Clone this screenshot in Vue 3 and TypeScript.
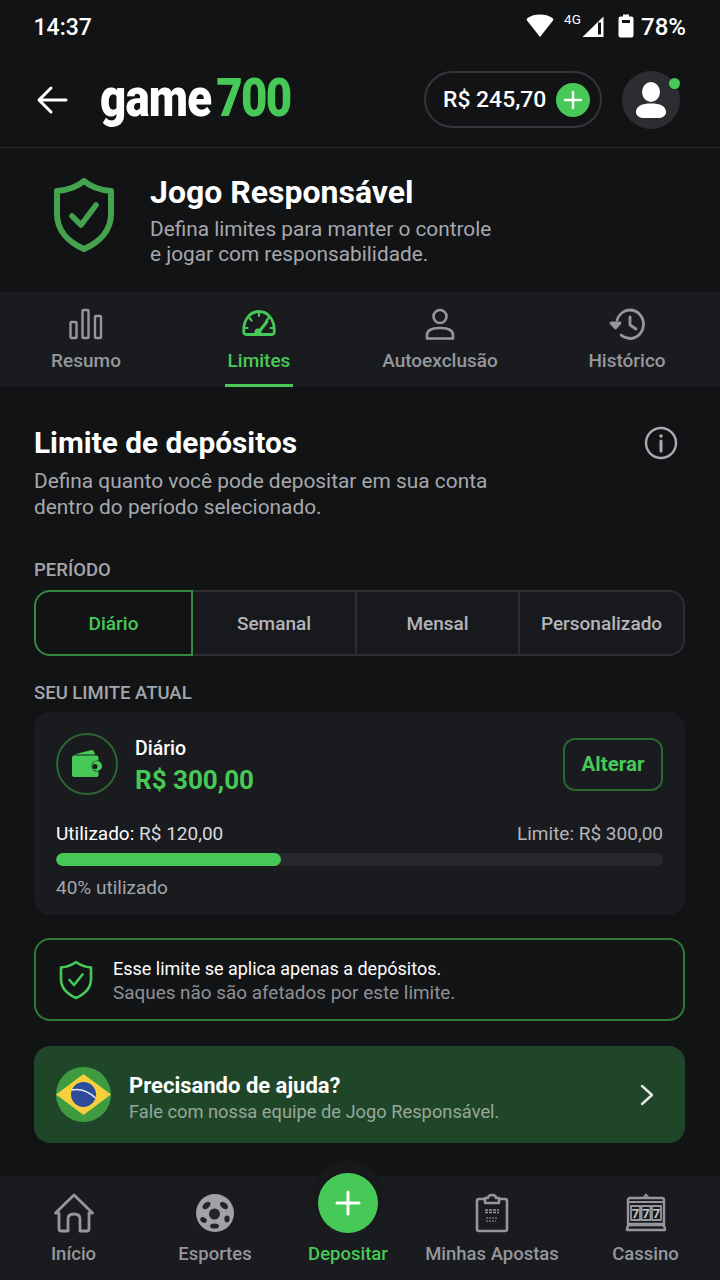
<script setup lang="ts">
const tabs = [
  { label: 'Resumo', icon: 'bars' },
  { label: 'Limites', icon: 'gauge', active: true },
  { label: 'Autoexclusão', icon: 'person' },
  { label: 'Histórico', icon: 'history' },
]
const periods = ['Diário', 'Semanal', 'Mensal', 'Personalizado']
</script>

<template>
  <div class="page">
    <div class="status">
      <span class="time">14:37</span>
      <div class="status-right">
        <svg class="wifi" width="28" height="24" viewBox="0 0 28 24"><path d="M14 23 L1 6.500 Q0 5 1.500 4 C5 1.500 9.500 0.500 14 0.500 C18.500 0.500 23 1.500 26.500 4 Q28 5 27 6.500 Z" fill="#fff"/></svg>
        <span class="net">4G</span>
        <svg class="signal" width="22" height="22" viewBox="0 0 22 22"><path d="M21.500 0.500 V21 H0.500 Z" fill="#fff"/><rect x="16" y="6.500" width="3" height="12" fill="#121314"/></svg>
        <svg class="batt" width="16" height="24" viewBox="0 0 16 24"><path d="M5 0.500 H11 V2.500 H13.500 Q15.500 2.500 15.500 4.500 V21.500 Q15.500 23.500 13.500 23.500 H2.500 Q0.500 23.500 0.500 21.500 V4.500 Q0.500 2.500 2.500 2.500 H5 Z" fill="#fff"/><rect x="4" y="6" width="8" height="3" fill="#121314"/></svg>
        <span class="pct">78%</span>
      </div>
    </div>

    <header class="topbar">
      <svg class="back" width="32" height="32" viewBox="0 0 32 32" fill="none" stroke="#fff" stroke-width="3" stroke-linecap="round" stroke-linejoin="round"><path d="M30 16 H4 M15 4 L3 16 L15 28"/></svg>
      <div class="logo"><span class="logo-in">game<em>700</em></span></div>
      <div class="balance">
        <span>R$ 245,70</span>
        <span class="plus-small"><svg width="20" height="20" viewBox="0 0 20 20" stroke="#fff" stroke-width="2.400" stroke-linecap="round"><path d="M10 2 V18 M2 10 H18"/></svg></span>
      </div>
      <div class="avatar">
        <svg width="32" height="36" viewBox="0 0 32 36" fill="#fff"><ellipse cx="16" cy="10" rx="9" ry="10"/><path d="M1 30 C1 24 7 21.500 16 21.500 C25 21.500 31 24 31 30 C31 34 27 36 23 36 H9 C5 36 1 34 1 30 Z"/></svg>
        <i class="online"></i>
      </div>
    </header>

    <section class="hero">
      <svg class="hero-shield" width="62" height="74" viewBox="0 0 62 74" fill="none"><path d="M31 3 C38 9 47 12 58 13 V36 C58 52 47 64 31 71 C15 64 4 52 4 36 V13 C15 12 24 9 31 3 Z" stroke="#43a34f" stroke-width="6" stroke-linejoin="round"/><path d="M19 38 L28 47 L43 27" stroke="#43a34f" stroke-width="5.500" stroke-linecap="round" stroke-linejoin="round"/></svg>
      <div>
        <h1>Jogo Responsável</h1>
        <p>Defina limites para manter o controle<br>e jogar com responsabilidade.</p>
      </div>
    </section>

    <nav class="tabs">
      <div v-for="t in tabs" :key="t.label" class="tab" :class="{ on: t.active }">
        <svg v-if="t.icon === 'bars'" width="36" height="32" viewBox="0 0 36 32" fill="none" stroke="currentColor" stroke-width="2.400"><rect x="2.500" y="14" width="6" height="16" rx="1"/><rect x="14.500" y="2" width="6" height="28" rx="1"/><rect x="27" y="8" width="6" height="22" rx="1"/></svg>
        <svg v-else-if="t.icon === 'gauge'" width="36" height="32" viewBox="0 0 36 32" fill="none" stroke="currentColor" stroke-width="2.800" stroke-linecap="round" stroke-linejoin="round"><path d="M5 26.500 Q3 26.500 2.800 24 C2 12 9 3.500 18 3.500 C27 3.500 34 12 33.200 24 Q33 26.500 31 26.500 Z"/><path d="M18 4.500 V8 M8.500 10 L10.500 12.500 M27.500 10 L25.500 12.500 M4 20 H6.500 M32 20 H29.500" stroke-width="2.200"/><path d="M17 25 L26 13.500" stroke-width="3"/><circle cx="17" cy="24" r="3.500" fill="currentColor" stroke="none"/></svg>
        <svg v-else-if="t.icon === 'person'" width="32" height="32" viewBox="0 0 32 32" fill="none" stroke="currentColor" stroke-width="2.600" stroke-linejoin="round"><circle cx="16" cy="8.500" r="6.500"/><path d="M3 30.500 V27 C3 22.500 8 20 16 20 C24 20 29 22.500 29 27 V30.500 Z"/></svg>
        <svg v-else width="36" height="32" viewBox="0 0 36 32" fill="none" stroke="currentColor" stroke-width="2.800" stroke-linecap="round" stroke-linejoin="round"><path d="M8 12 C10 6 15 2 21 2 C28.500 2 34.500 8.500 34.500 16 C34.500 24 28.500 30.500 21 30.500 C17.500 30.500 14.500 29 12 27"/><path d="M21 9 V17 L27 21"/><path d="M2 15 H11 L6.500 20 Z" fill="currentColor"/></svg>
        <span>{{ t.label }}</span>
      </div>
    </nav>

    <main class="content">
      <div class="title-row">
        <h2>Limite de depósitos</h2>
        <svg width="34" height="34" viewBox="0 0 34 34" fill="none" stroke="#a9abb1" stroke-width="2.400" stroke-linecap="round"><circle cx="17" cy="17" r="15"/><path d="M17 15 V25" stroke-width="3"/><circle cx="17" cy="10" r="1.200" fill="#a9abb1" stroke-width="1.200"/></svg>
      </div>
      <p class="sub">Defina quanto você pode depositar em sua conta<br>dentro do período selecionado.</p>

      <div class="label periodo">PERÍODO</div>
      <div class="seg">
        <div v-for="(p, i) in periods" :key="p" class="seg-item" :class="{ on: i === 0 }">{{ p }}</div>
      </div>

      <div class="label atual">SEU LIMITE ATUAL</div>
      <div class="card">
        <div class="card-top">
          <div class="wallet">
            <svg width="32" height="30" viewBox="0 0 32 30" fill="#47c957"><path d="M3 5.500 L20.500 1 Q23 0.500 24 5.500 Z"/><path d="M1 8.500 Q1 6.500 3 6.500 H25.500 Q27.500 6.500 27.500 8.500 V11.500 H26 A5.500 5.500 0 0 0 26 22.500 H27.500 V26 Q27.500 28 25.500 28 H3 Q1 28 1 26 Z"/><path d="M26 12 A5 5 0 0 1 26 22 A5 5 0 0 1 26 12 Z M24 15 A2.500 2.500 0 0 0 24 20 A2.500 2.500 0 0 0 24 15 Z" fill-rule="evenodd"/></svg>
          </div>
          <div class="card-info">
            <div class="card-name">Diário</div>
            <div class="card-val">R$ 300,00</div>
          </div>
          <div class="alter">Alterar</div>
        </div>
        <div class="usage"><span class="used">Utilizado: <b>R$ 120,00</b></span><span class="lim">Limite: R$ 300,00</span></div>
        <div class="track"><div class="fill" :style="{ width: '37.100%' }"></div></div>
        <div class="pct-used">40% utilizado</div>
      </div>

      <div class="notice">
        <svg width="36" height="40" viewBox="0 0 36 40" fill="none" stroke="#47c957" stroke-width="2.600" stroke-linecap="round" stroke-linejoin="round"><path d="M18 2 C22 5 27 7 33 7.500 V19 C33 28 27 34 18 38 C9 34 3 28 3 19 V7.500 C9 7 14 5 18 2 Z"/><path d="M11.500 20 L16 25 L24.500 14.500"/></svg>
        <div class="notice-text"><div class="n1">Esse limite se aplica apenas a depósitos.</div><div class="n2">Saques não são afetados por este limite.</div></div>
      </div>

      <div class="help">
        <svg width="55" height="55" viewBox="0 0 55 55"><circle cx="27.500" cy="27.500" r="27.500" fill="#3f9b3f"/><path d="M27.500 7 L55 27.500 L27.500 48 L0 27.500 Z" fill="#f6cf3c"/><circle cx="27.500" cy="27.500" r="12.500" fill="#2f4c9c"/><path d="M15.500 23 C23 21.500 32 24 39.500 31" stroke="#e8edf5" stroke-width="1.500" fill="none"/></svg>
        <div class="help-text"><div class="h1">Precisando de ajuda?</div><div class="h2">Fale com nossa equipe de Jogo Responsável.</div></div>
        <svg width="16" height="24" viewBox="0 0 16 24" fill="none" stroke="#e6e9e6" stroke-width="2.400" stroke-linecap="round" stroke-linejoin="round"><path d="M3 3 L13 12 L3 21"/></svg>
      </div>
    </main>

    <footer class="bottom">
      <div class="nav-item">
        <svg width="40" height="40" viewBox="0 0 40 40" fill="none" stroke="currentColor" stroke-width="2.800" stroke-linecap="round" stroke-linejoin="round"><path d="M1.500 20 L20 2 L38.500 20 H35 V36 Q35 38 33 38 H26 V26 Q26 21 20 21 Q14 21 14 26 V38 H7 Q5 38 5 36 V20 Z"/></svg>
        <span>Início</span>
      </div>
      <div class="nav-item">
        <svg width="40" height="40" viewBox="0 0 40 40"><circle cx="20" cy="20" r="19" fill="#a0a2a8"/><g fill="#232427"><circle cx="19.500" cy="21" r="5.500"/><ellipse cx="11.500" cy="12.500" rx="4.500" ry="2.800" transform="rotate(-40 11.500 12.500)"/><ellipse cx="29" cy="12.500" rx="4.500" ry="2.800" transform="rotate(40 29 12.500)"/><ellipse cx="32" cy="26" rx="2.600" ry="3.400"/><ellipse cx="19.500" cy="33" rx="4.500" ry="2.600"/><ellipse cx="8.500" cy="27" rx="3.400" ry="2.600" transform="rotate(30 8.500 27)"/></g></svg>
        <span>Esportes</span>
      </div>
      <div class="nav-item dep">
        <div class="fab-back"></div>
        <div class="fab"><svg width="26" height="26" viewBox="0 0 26 26" stroke="#fff" stroke-width="3" stroke-linecap="round"><path d="M13 2 V24 M2 13 H24"/></svg></div>
        <span>Depositar</span>
      </div>
      <div class="nav-item">
        <svg width="34" height="40" viewBox="0 0 34 40" fill="none" stroke="currentColor" stroke-width="2.600" stroke-linejoin="round"><path d="M10 6 H4 Q2 6 2 8 V36 Q2 38 4 38 H30 Q32 38 32 36 V8 Q32 6 30 6 H24"/><path d="M10 5 H13 C13 1 21 1 21 5 H24 V10 H10 Z"/><path d="M10 17 H24 M10 19.500 H24" stroke-width="1.600" stroke-dasharray="3 1"/><path d="M11 25 H23 M11 28 H21" stroke-width="1.400" stroke-dasharray="2 1" opacity=".7"/></svg>
        <span>Minhas Apostas</span>
      </div>
      <div class="nav-item">
        <svg width="42" height="40" viewBox="0 0 42 40" fill="none" stroke="currentColor" stroke-width="2.400" stroke-linecap="round" stroke-linejoin="round"><path d="M5 5 H37 Q39 5 39 7 V31 H3 V7 Q3 5 5 5 Z"/><path d="M3 9 H39" stroke-width="1.800"/><path d="M19 4 L21 1.500 L23 4" stroke-width="1.800"/><path d="M2 37 Q2 32 5 32 H37 Q40 32 40 37 Z"/><g stroke-width="1.800"><rect x="6" y="13" width="9" height="14"/><rect x="16.500" y="13" width="9" height="14"/><rect x="27" y="13" width="9" height="14"/></g><g class="sevens" stroke="none"><text x="10.500" y="25">7</text><text x="21" y="25">7</text><text x="31.500" y="25">7</text></g></svg>
        <span>Cassino</span>
      </div>
    </footer>
  </div>
</template>

<style>
html, body { margin: 0; background: #121314; }
</style>

<style scoped>
.page { width: 720px; height: 1280px; background: #121314; color: #fff; font-family: Roboto, "Noto Sans", sans-serif; display: flex; flex-direction: column; overflow: hidden; }

.status { height: 52px; flex: none; box-sizing: border-box; padding: 14px 34px 0 33.500px; display: flex; justify-content: space-between; align-items: flex-start; font-size: 23px; font-weight: 500; }
.time { line-height: 28px; }
.status-right { display: flex; align-items: flex-start; height: 28px; }
.net { font-size: 13.500px; line-height: 14px; margin: -2px 0 0 10px; font-weight: 400; width: 18px; }
.signal { margin: 2px 0 0 0; }
.batt { margin: 0 0 0 14px; }
.pct { margin: -1px 0 0 7px; line-height: 28px; font-size: 24px; }

.topbar { height: 96px; flex: none; box-sizing: border-box; display: flex; align-items: center; padding: 0 40px 0 36px; border-bottom: 1.500px solid #25272b; }
.back { flex: none; }
.logo { width: 190px; margin-left: 32px; flex: none; height: 60px; }
.logo-in { display: inline-block; font-size: 53px; font-weight: 900; line-height: 56px; letter-spacing: -1px; transform: scaleX(.86); transform-origin: 0 50%; white-space: nowrap; }
.logo-in em { font-style: normal; color: #47c957; margin-left: 6px; letter-spacing: -2px; }
.balance { margin-left: auto; width: 178px; height: 57px; box-sizing: border-box; border: 2px solid #33353a; border-radius: 29px; display: flex; align-items: center; justify-content: space-between; padding: 0 10px 0 17px; font-size: 22.900px; font-weight: 500; white-space: nowrap; }
.plus-small { width: 34px; height: 34px; border-radius: 50%; background: #47c957; display: flex; align-items: center; justify-content: center; }
.avatar { position: relative; width: 58px; height: 58px; border-radius: 50%; background: #2b2d31; margin-left: 20px; display: flex; align-items: center; justify-content: center; }
.online { position: absolute; right: 0; top: 7px; width: 11px; height: 11px; background: #47c957; border-radius: 50%; }

.hero { height: 144px; flex: none; box-sizing: border-box; padding: 26px 0 0 53px; display: flex; gap: 35px; align-items: flex-start; }
.hero-shield { margin-top: 4px; flex: none; }
.hero h1 { margin: 0; font-size: 32px; line-height: 36px; font-weight: 700; }
.hero p { margin: 7px 0 0; font-size: 20.800px; line-height: 25px; color: #a6a8ae; }

.tabs { height: 95px; background: #1a1b1e; display: grid; grid-template-columns: 172px 174px 188px 186px; flex: none; }
.tab { position: relative; display: flex; flex-direction: column; align-items: center; padding-top: 16px; color: #95979d; font-size: 19px; font-weight: 500; }
.tab span { margin-top: 10px; line-height: 22px; }
.tab.on { color: #47c957; }
.tab.on::after { content: ""; position: absolute; bottom: 0; left: 53px; width: 68px; height: 3px; background: #47c957; }

.content { flex: 1; padding: 0 35px 0 34px; }
.title-row { display: flex; justify-content: space-between; align-items: center; padding-top: 38px; padding-right: 7px; }
.title-row h2 { margin: 0; font-size: 29.800px; line-height: 36px; font-weight: 700; }
.sub { margin: 7px 0 0; font-size: 20.870px; line-height: 26px; color: #a6a8ae; }
.label { font-size: 18.500px; font-weight: 500; color: #a3a5ab; line-height: 22px; }
.periodo { margin-top: 39px; }
.seg { margin-top: 9px; height: 66px; box-sizing: border-box; display: grid; grid-template-columns: 159px 164px 163px 165px; border-radius: 16px; background: #18191c; }
.seg-item { display: flex; align-items: center; justify-content: center; font-size: 19px; font-weight: 500; color: #b3b5bb; border: 2px solid #2c2e32; border-left: 0; }
.seg-item:last-child { border-radius: 0 16px 16px 0; }
.seg-item.on { color: #47c957; background: #121314; border: 2px solid #36873f; border-radius: 16px 0 0 16px; }
.atual { margin-top: 26px; }
.card { margin-top: 8px; height: 203px; box-sizing: border-box; background: #1a1b1e; border-radius: 16px; padding: 20px 22px 0; }
.card-top { display: flex; align-items: center; height: 64px; }
.wallet { width: 62px; height: 62px; box-sizing: border-box; border: 2px solid #2a6532; border-radius: 50%; display: flex; align-items: center; justify-content: center; }
.card-info { margin-left: 17px; padding-top: 4px; }
.card-name { font-size: 19.500px; font-weight: 500; line-height: 24px; }
.card-val { font-size: 26px; font-weight: 700; color: #47c957; line-height: 32px; margin-top: 3px; }
.alter { margin-left: auto; width: 100px; height: 53px; box-sizing: border-box; border: 2px solid #2a6532; border-radius: 12px; display: flex; align-items: center; justify-content: center; color: #47c957; font-size: 20.500px; font-weight: 700; }
.usage { margin-top: 26px; display: flex; justify-content: space-between; font-size: 19px; line-height: 24px; }
.used { font-weight: 400; }
.used b { font-weight: 400; color: #d9dade; }
.lim { color: #b3b5bb; }
.track { margin-top: 7px; height: 13px; border-radius: 6.500px; background: #26282d; overflow: hidden; }
.fill { height: 100%; background: #47c957; border-radius: 6.500px; }
.pct-used { margin-top: 10px; font-size: 19px; line-height: 24px; color: #a3a5ab; }

.notice { margin-top: 23px; height: 83px; box-sizing: border-box; border: 2px solid #2f7a37; border-radius: 16px; background: #131416; display: flex; align-items: center; padding-left: 22px; gap: 19px; }
.notice-text { padding-top: 2px; }
.n1 { font-size: 18px; line-height: 24px; color: #fff; }
.n2 { font-size: 18.900px; line-height: 24px; color: #8f9197; }

.help { margin-top: 25px; height: 97px; box-sizing: border-box; border-radius: 16px; background: #20462a; display: flex; align-items: center; padding: 0 30px 0 22px; }
.help-text { margin-left: 18px; flex: 1; padding-top: 7px; }
.h1 { font-size: 22px; font-weight: 700; line-height: 28px; }
.h2 { font-size: 18.300px; line-height: 24px; color: #97a79b; }

.bottom { height: 104px; flex: none; background: #1a1b1e; display: flex; position: relative; padding-top: 17px; box-sizing: border-box; }
.nav-item { position: relative; flex: none; display: flex; flex-direction: column; align-items: center; color: #95979d; font-size: 18.500px; font-weight: 500; }
.nav-item:nth-child(1) { width: 147px; }
.nav-item:nth-child(2) { width: 136px; }
.nav-item:nth-child(3) { width: 130px; color: #47c957; }
.nav-item:nth-child(4) { width: 158px; }
.nav-item:nth-child(5) { width: 149px; }
.nav-item span { position: absolute; top: 50px; line-height: 22px; white-space: nowrap; }
.fab-back { position: absolute; top: -33px; width: 70px; height: 70px; background: #17181a; border-radius: 50%; }
.fab { position: absolute; top: -20px; width: 60px; height: 60px; background: #47c957; border-radius: 50%; display: flex; align-items: center; justify-content: center; }
.sevens text { font-family: Roboto, sans-serif; font-size: 13px; font-weight: 700; fill: #c5c7cb; text-anchor: middle; }
</style>
